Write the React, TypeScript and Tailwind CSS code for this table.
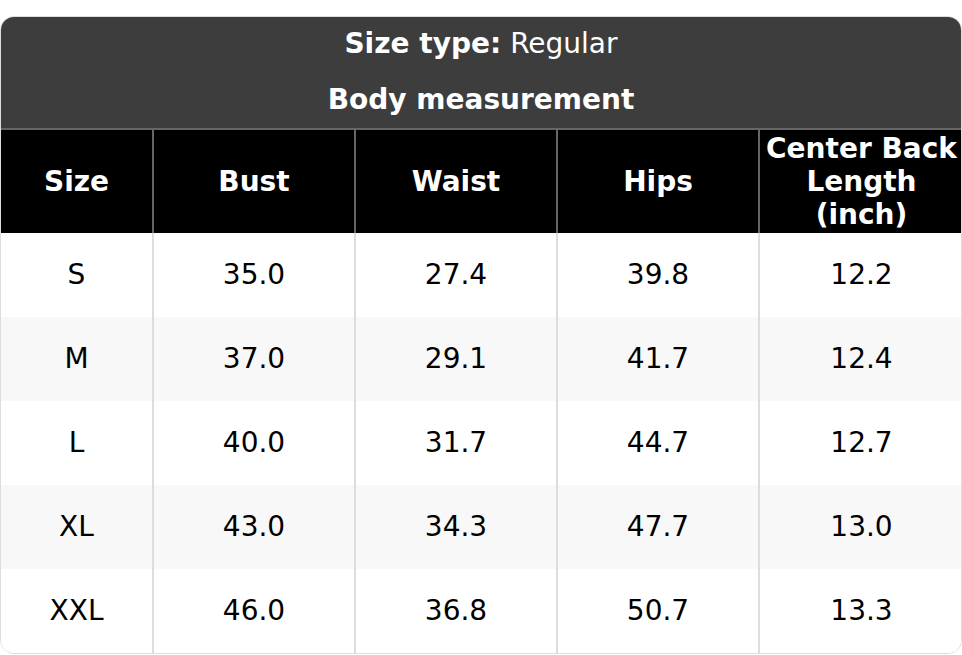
const columns = ['Size', 'Bust', 'Waist', 'Hips', 'Center Back Length (inch)'];

const rows = [
  ['S', '35.0', '27.4', '39.8', '12.2'],
  ['M', '37.0', '29.1', '41.7', '12.4'],
  ['L', '40.0', '31.7', '44.7', '12.7'],
  ['XL', '43.0', '34.3', '47.7', '13.0'],
  ['XXL', '46.0', '36.8', '50.7', '13.3'],
];

const widths = ['w-[152px]', 'w-[202px]', 'w-[202px]', 'w-[202px]', 'w-[204px]'];

export default function App() {
  return (
    <div className="min-h-screen bg-white pt-[16px]" style={{ fontFamily: '"DejaVu Sans", sans-serif' }}>
      <div className="w-[962px] overflow-hidden rounded-[14px] border border-[#dddddd]">
        {/* Title block */}
        <div className="bg-[#3d3d3d] text-white text-[28px]">
          <div className="h-[54px] flex items-center justify-center">
            <span className="font-bold">Size type:</span>
            <span className="ml-[9px]">Regular</span>
          </div>
          <div className="h-[57px] flex items-center justify-center font-bold">Body measurement</div>
        </div>

        <table className="w-full border-collapse table-fixed">
          <thead>
            <tr className="bg-black text-white">
              {columns.map((c, i) => (
                <th
                  key={c}
                  className={`${widths[i]} h-[104px] px-1 text-[28px] leading-[33px] font-bold text-center border-t-2 border-[#666666] ${i > 0 ? 'border-l-2' : ''}`}
                >
                  {c}
                </th>
              ))}
            </tr>
          </thead>
          <tbody>
            {rows.map((r, ri) => (
              <tr key={r[0]} className={ri % 2 === 1 ? 'bg-[#f8f8f8]' : 'bg-white'}>
                {r.map((v, ci) => (
                  <td
                    key={ci}
                    className={`h-[84px] text-center text-[28px] text-black ${ci > 0 ? 'border-l-2 border-[#dddddd]' : ''}`}
                  >
                    {v}
                  </td>
                ))}
              </tr>
            ))}
          </tbody>
        </table>
      </div>
    </div>
  );
}
